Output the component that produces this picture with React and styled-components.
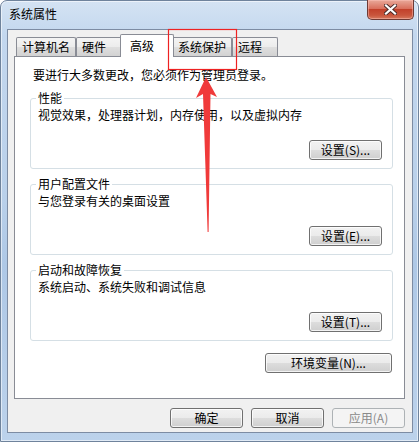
import React from 'react';
import styled, { createGlobalStyle, css } from 'styled-components';

const GlobalStyle = createGlobalStyle`
  html, body {
    margin: 0;
    padding: 0;
    background: #ffffff;
  }
  body {
    font-family: "Noto Sans CJK SC", "Liberation Sans", sans-serif;
    font-size: 12px;
    color: #000;
  }
  #root {
    width: 420px;
    height: 442px;
    overflow: hidden;
  }
`;

const Window = styled.div`
  position: relative;
  box-sizing: border-box;
  width: 419px;
  height: 442px;
  padding: 0 5px 8px 6px;
  display: flex;
  flex-direction: column;
  border: 1px solid #6f839c;
  border-radius: 7px 7px 0 0;
  background: linear-gradient(to bottom, #d4e3f3 0%, #c3d7ee 8%, #b9d0ea 45%, #aec8e6 60%, #bcd2eb 100%);
  box-shadow: inset 0 0 0 1px rgba(255, 255, 255, 0.55);
`;

const TitleBar = styled.div`
  display: flex;
  justify-content: space-between;
  align-items: flex-start;
  height: 28px;
`;

const Title = styled.div`
  margin: 6px 0 0 2px;
  line-height: 14px;
`;

const CloseButton = styled.div`
  box-sizing: border-box;
  width: 47px;
  height: 20px;
  margin: -1px -1px 0 0;
  display: flex;
  align-items: center;
  justify-content: center;
  border: 1px solid #6e3a34;
  border-top: none;
  border-radius: 0 0 5px 5px;
  background: linear-gradient(to bottom, #e9a99a 0%, #d9705d 45%, #c2412b 50%, #c9553c 80%, #d67a5f 100%);
  box-shadow: inset 0 0 0 1px rgba(255, 200, 190, 0.45);
`;

const Client = styled.div`
  flex: 1;
  display: flex;
  flex-direction: column;
  padding: 4px 7px 0 6px;
  background: #f0f0f0;
  border: 1px solid #7d8ca3;
`;

const TabRow = styled.div`
  display: flex;
  align-items: flex-end;
  height: 22px;
  padding-left: 2px;
  position: relative;
  z-index: 2;
`;

const Tab = styled.div`
  box-sizing: border-box;
  min-width: 46px;
  height: 19px;
  padding: 2px 5px 0;
  line-height: 14px;
  white-space: nowrap;
  border: 1px solid #898c95;
  border-bottom: none;
  border-radius: 2px 2px 0 0;
  background: linear-gradient(to bottom, #f4f4f4 0%, #ececec 50%, #dfdfdf 50%, #d2d2d2 100%);

  ${p => p.$active && css`
    position: relative;
    min-width: 54px;
    height: 23px;
    margin: 0 -2px -1px;
    padding: 4px 9px 0;
    background: #ffffff;
  `}
`;

const Panel = styled.div`
  box-sizing: border-box;
  height: 343px;
  padding: 11px 11px 0 15px;
  display: flex;
  flex-direction: column;
  background: #ffffff;
  border: 1px solid #898c95;
  position: relative;
  z-index: 1;
`;

const Intro = styled.div`
  margin-left: 3px;
  line-height: 14px;
  white-space: nowrap;
`;

const Group = styled.fieldset`
  margin: ${p => (p.$first ? '9px' : '8px')} 0 0;
  padding: 0 10px 0 7px;
  min-width: 0;
  border: 1px solid #d5dfe5;
  border-radius: 3px;
`;

const Legend = styled.legend`
  margin-left: -2px;
  padding: 0 2px;
  line-height: 14px;
`;

const GroupBody = styled.div`
  box-sizing: border-box;
  height: 63px;
  padding: 3px 0 8px;
  display: flex;
  flex-direction: column;
  justify-content: space-between;
`;

const Desc = styled.div`
  line-height: 14px;
  white-space: nowrap;
`;

const Button = styled.div`
  box-sizing: border-box;
  width: ${p => p.$width || 73}px;
  height: 20px;
  display: flex;
  align-items: center;
  justify-content: center;
  align-self: flex-end;
  line-height: 14px;
  white-space: nowrap;
  border: 1px solid #707070;
  border-radius: 3px;
  background: linear-gradient(to bottom, #f2f2f2 0%, #ebebeb 50%, #dddddd 50%, #cfcfcf 100%);
  box-shadow: inset 0 0 0 1px rgba(255, 255, 255, 0.75);

  ${p => p.$disabled && css`
    color: #8a8a8a;
    border-color: #adb2b5;
    background: #f4f4f4;
    box-shadow: none;
  `}
`;

const EnvRow = styled.div`
  display: flex;
  justify-content: flex-end;
  margin: 12px 1px 0 0;
`;

const Footer = styled.div`
  display: flex;
  justify-content: flex-end;
  gap: 8px;
  margin-top: 9px;
`;

const Annotation = styled.svg`
  position: absolute;
  left: -1px;
  top: -1px;
  pointer-events: none;
  z-index: 5;
`;

const groups = [
  { title: '性能', desc: '视觉效果，处理器计划，内存使用，以及虚拟内存', btn: '设置(S)...' },
  { title: '用户配置文件', desc: '与您登录有关的桌面设置', btn: '设置(E)...' },
  { title: '启动和故障恢复', desc: '系统启动、系统失败和调试信息', btn: '设置(T)...' },
];

const tabs = ['计算机名', '硬件', '高级', '系统保护', '远程'];

export default function App() {
  return (
    <>
      <GlobalStyle />
      <Window>
        <TitleBar>
          <Title>系统属性</Title>
          <CloseButton>
            <svg width="13" height="11" viewBox="0 0 13 11">
              <path d="M2 1.5 L11 9.5 M11 1.5 L2 9.5" stroke="#4a2a28" strokeWidth="4" strokeLinecap="square" />
              <path d="M2 1.5 L11 9.5 M11 1.5 L2 9.5" stroke="#ffffff" strokeWidth="2.2" strokeLinecap="square" />
            </svg>
          </CloseButton>
        </TitleBar>
        <Client>
          <TabRow>
            {tabs.map(t => (
              <Tab key={t} $active={t === '高级'}>{t}</Tab>
            ))}
          </TabRow>
          <Panel>
            <Intro>要进行大多数更改，您必须作为管理员登录。</Intro>
            {groups.map((g, i) => (
              <Group key={g.title} $first={i === 0}>
                <Legend>{g.title}</Legend>
                <GroupBody>
                  <Desc>{g.desc}</Desc>
                  <Button>{g.btn}</Button>
                </GroupBody>
              </Group>
            ))}
            <EnvRow>
              <Button $width={127}>环境变量(N)...</Button>
            </EnvRow>
          </Panel>
          <Footer>
            <Button>确定</Button>
            <Button>取消</Button>
            <Button $disabled>应用(A)</Button>
          </Footer>
        </Client>
        <Annotation width="420" height="442" viewBox="0 0 420 442">
          <rect x="168.5" y="29.5" width="68" height="40" fill="none" stroke="#ee2222" strokeWidth="1.2" />
          <polygon
            points="206,77 217,97 210.5,94 208.6,232 207.6,232 203,94 196,98"
            fill="#f03a3a"
          />
        </Annotation>
      </Window>
    </>
  );
}
